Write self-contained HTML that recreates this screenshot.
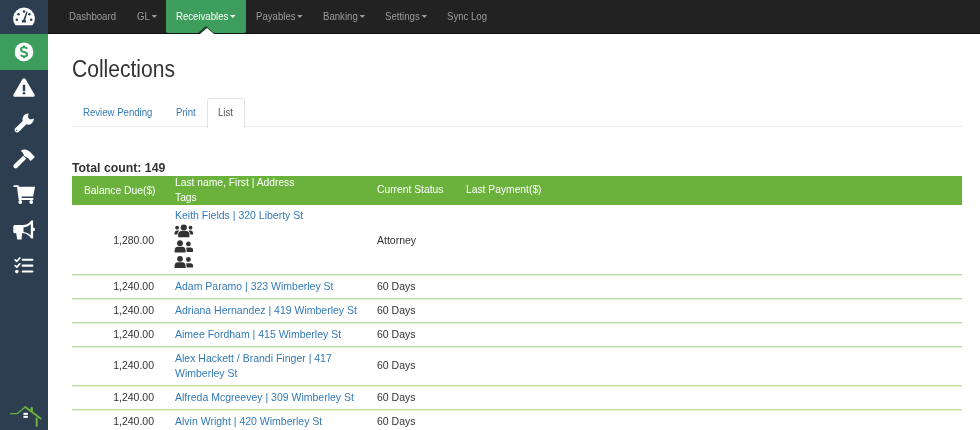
<!DOCTYPE html>
<html><head><meta charset="utf-8">
<style>
*{box-sizing:border-box;margin:0;padding:0}
html,body{width:980px;height:430px;overflow:hidden;background:#fff;font-family:"Liberation Sans",sans-serif;color:#333}
#side{position:absolute;left:0;top:0;width:48px;height:430px;background:#2c3e50}
#side .act{position:absolute;left:0;top:34px;width:48px;height:36px;background:#3c9d5d}
#side svg{position:absolute}
#nav{position:absolute;left:48px;top:0;width:932px;height:34px;background:#222;border-bottom:1px solid #111}
#nav span{position:absolute;top:10px;font-size:10.5px;line-height:12px;transform-origin:0 0;transform:scaleX(0.915);color:#9d9d9d;white-space:nowrap}
#nav .actbox{position:absolute;left:118px;top:0;width:80px;height:33px;background:#3c9d5d;border-radius:0 0 2px 2px}
#nav span.on{color:#fff}
.caret{display:inline-block;width:0;height:0;border-left:3px solid transparent;border-right:3px solid transparent;border-top:3px solid currentColor;vertical-align:middle;margin-left:2px;margin-top:-1px}
.notch{position:absolute;left:151.5px;top:27.5px;width:0;height:0;border-left:7px solid transparent;border-right:7px solid transparent;border-bottom:6.5px solid #fff}
.notch2{position:absolute;left:150.3px;top:26.3px;width:0;height:0;border-left:8.2px solid transparent;border-right:8.2px solid transparent;border-bottom:7.7px solid #1d3a26}
h1{position:absolute;left:72px;top:56px;font-size:23px;font-weight:normal;line-height:26px;color:#333;white-space:nowrap;transform-origin:0 0;transform:scaleX(0.915)}
#tabline{position:absolute;left:72px;top:126px;width:890px;height:1px;background:#ebebeb}
.tab{position:absolute;top:106px;font-size:10.5px;line-height:12px;color:#337ab7;white-space:nowrap;transform-origin:0 0;transform:scaleX(0.915)}
#listtab{position:absolute;left:207px;top:98px;width:38px;height:30px;background:#fff;border:1px solid #e3e3e3;border-bottom:none;border-radius:3px 3px 0 0}
#total{position:absolute;left:72px;top:160.5px;font-size:12.3px;font-weight:bold;line-height:14px;color:#333;white-space:nowrap}
#thead{position:absolute;left:72px;top:176px;width:890px;height:29px;background:#6ab23c;color:#fff}
#thead span{position:absolute;font-size:10.3px;line-height:15px;white-space:nowrap}
.row{position:absolute;left:72px;width:890px;border-bottom:1px solid #b6dca2;box-shadow:0 1px 0 #e2f1da}
.row span{position:absolute;font-size:10.5px;line-height:15px;white-space:nowrap}
.row .bal{right:808px;text-align:right}
.row .nm{left:103px;color:#337ab7}
.row .st{left:305px}
.layer{position:absolute;left:0;top:0;width:980px;height:430px;will-change:transform}
</style></head><body><div class="layer">
<div id="side">
  <div class="act"></div>
<svg width="48" height="430" viewBox="0 0 48 430" style="left:0;top:0">
<g fill="#fff">
<!-- gauge -->
<path d="M15.6 25.3 A10.9 10.9 0 1 1 32.4 25.3 Z"/>
<g fill="#2c3e50">
<circle cx="18.5" cy="14.2" r="1.25"/><circle cx="24" cy="11.6" r="1.25"/><circle cx="29.4" cy="14.2" r="1.25"/>
<circle cx="16.8" cy="19.8" r="1.25"/><circle cx="31.2" cy="19.8" r="1.25"/>
<path d="M23.1 20.6 L26.4 11.6 L27.6 12 L24.9 21 Z"/>
<rect x="21.8" y="19.9" width="4.2" height="2.6" rx="0.8"/>
</g>
<!-- dollar -->
<circle cx="24" cy="51.9" r="9.3"/>
<g fill="none" stroke="#3c9d5d" stroke-width="2" stroke-linecap="butt"><path d="M27.1 48.9 C26.5 47.7 25.4 47.3 24 47.3 C22.2 47.3 21 48.2 21 49.7 C21 53.1 27.1 50.9 27.1 54.2 C27.1 55.7 25.9 56.6 24 56.6 C22.5 56.6 21.4 56.1 20.8 54.9"/><path d="M24 45.6 V47.4 M24 56.5 V58.2"/></g>
<!-- warning -->
<path d="M24 78.3 Q25 78.3 25.6 79.3 L34.6 94.8 Q35.2 96.6 33.6 96.8 L14.4 96.8 Q12.8 96.6 13.4 94.8 L22.4 79.3 Q23 78.3 24 78.3 Z"/>
<g fill="#2c3e50"><rect x="22.8" y="84.8" width="2.4" height="6.4" rx="0.6"/><circle cx="24" cy="93.2" r="1.25"/></g>
<!-- wrench -->
<path d="M15 128.4 L22.8 121 A5.7 5.7 0 0 1 28.6 113.5 L28 116.4 Q28.2 119.4 31.4 119.2 L33.9 118.6 A5.7 5.7 0 0 1 26.4 124.3 L18.6 131.9 A2.55 2.55 0 0 1 15 128.4 Z"/>
<circle cx="16.7" cy="130.2" r="0.65" fill="#2c3e50"/>
<!-- hammer -->
<path d="M14 164.6 L23.2 155.8 L26.2 158.8 L17.2 167.8 A2.2 2.2 0 0 1 14 164.6 Z"/>
<path d="M20.8 150.8 Q25.8 147.2 31.4 153.2 L33.2 155.2 L34.9 157 L30.8 161.1 L28.9 159.2 L28.7 158.5 Q26.4 157 24.2 156 Q23.6 152.8 20.8 150.8 Z"/>
<!-- cart -->
<path d="M14.2 185.2 L18.4 185.2 L19.1 186.8 L35.1 186.8 L33.1 196.6 L21.6 196.6 L21.8 197.9 L33.5 197.9 L33.2 199.9 L18.8 199.9 L17 187 L14.2 187 A0.9 0.9 0 0 1 14.2 185.2 Z"/>
<circle cx="20.3" cy="202" r="1.9"/><circle cx="31.2" cy="202" r="1.9"/>
<!-- megaphone -->
<path d="M14.8 225.1 L22.7 225.1 C26.6 225.1 29.6 223.2 31.2 220.6 L33.1 220.6 L33.1 227.6 L35 228.4 L35 230.4 L33.1 231.2 L33.1 238.5 L31.2 238.5 C29.6 235.9 26.6 233.3 22.7 233.3 L22 233.3 L21.6 239.4 L17.2 239.4 L16.2 233.3 L14.8 233.3 Q13.3 233.3 13.3 231.8 L13.3 226.6 Q13.3 225.1 14.8 225.1 Z"/>
<path fill="#2c3e50" d="M23.5 227.3 C26.8 227 29.2 225.6 30.8 223.9 L30.8 235.3 C29.2 233.6 26.8 232.2 23.5 231.9 Z"/>
<!-- checklist -->
<path d="M15.2 259.8 L16.9 261.3 L19.8 258" stroke="#fff" stroke-width="1.7" fill="none" stroke-linecap="round" stroke-linejoin="round"/>
<path d="M15.2 265.6 L16.9 267.1 L19.8 263.8" stroke="#fff" stroke-width="1.7" fill="none" stroke-linecap="round" stroke-linejoin="round"/>
<circle cx="16.8" cy="271.6" r="1.8"/>
<rect x="21.7" y="258.7" width="11.7" height="2.1" rx="0.8"/>
<rect x="21.7" y="264.6" width="11.7" height="2.1" rx="0.8"/>
<rect x="21.7" y="270.5" width="11.7" height="2.1" rx="0.8"/>
</g>
<!-- house -->
<g fill="none" stroke="#6ab23c" stroke-linecap="round" stroke-linejoin="round">
<path d="M10.6 413.7 L17 413.7 L25.3 407" stroke-width="1.3"/>
<path d="M25.3 407 L40.6 418.6" stroke-width="1.9"/>
<path d="M36.7 418.4 L36.7 426" stroke-width="2"/>
</g>
<path d="M30.4 411.4 L30.4 408 Q31.6 405.6 32.9 408 L32.9 413.2 Z" fill="#6ab23c"/>
<g fill="#fff"><rect x="23.4" y="412.8" width="4.4" height="2.1"/><rect x="23.4" y="415.8" width="4.4" height="2.1"/></g>
</svg>
</div>
<div id="nav">
  <div class="actbox"></div>
  <div class="notch2"></div><div class="notch"></div>
  <span style="left:21px">Dashboard</span>
  <span style="left:89px">GL<i class="caret"></i></span>
  <span class="on" style="left:128px">Receivables<i class="caret"></i></span>
  <span style="left:208px">Payables<i class="caret"></i></span>
  <span style="left:275px">Banking<i class="caret"></i></span>
  <span style="left:337px">Settings<i class="caret"></i></span>
  <span style="left:399px">Sync Log</span>
</div>
<h1>Collections</h1>
<div id="tabline"></div>
<div id="listtab"></div>
<div class="tab" style="left:83px">Review Pending</div>
<div class="tab" style="left:176px">Print</div>
<div class="tab" style="left:218px;color:#555">List</div>
<svg width="30" height="50" viewBox="170 222 30 50" style="position:absolute;left:170px;top:222px" fill="#333">
<circle cx="183.8" cy="227.5" r="3.1"/>
<circle cx="177.1" cy="227.7" r="1.9"/><circle cx="190.5" cy="227.7" r="1.9"/>
<path d="M178.2 236.9 L178.2 234.6 Q178.2 231 181.4 231 L186.2 231 Q189.4 231 189.4 234.6 L189.4 236.9 Q189.4 237.3 189 237.3 L178.6 237.3 Q178.2 237.3 178.2 236.9 Z"/>
<path d="M174.4 234.6 Q174.4 230.4 177 230.4 L179.2 230.4 Q177.6 232 177.4 234.6 Z"/>
<path d="M193.2 234.6 Q193.2 230.4 190.6 230.4 L188.4 230.4 Q190 232 190.2 234.6 Z"/>
<g id="uf">
<circle cx="180" cy="243.2" r="2.9"/>
<path d="M174.6 251.8 L174.6 250.6 Q174.6 246.7 178 246.7 L182.2 246.7 Q185.6 246.7 185.6 250.6 L185.6 251.8 Q185.6 252.5 185 252.5 L175.2 252.5 Q174.6 252.5 174.6 251.8 Z"/>
<circle cx="188.4" cy="243.9" r="2.4"/>
<path d="M186.2 247.6 L190.4 247.6 Q193.1 247.6 193.1 250.4 L193.1 251.3 Q193.1 252 192.4 252 L186.6 252 Q186.6 249.4 186.2 247.6 Z"/>
</g>
<use href="#uf" transform="translate(0 15.6)"/>
</svg>
<div id="total">Total count: 149</div>
<div id="thead">
  <span style="left:12px;top:7px">Balance Due($)</span>
  <span style="left:103px;top:-1px">Last name, First | Address<br>Tags</span>
  <span style="left:305px;top:6px">Current Status</span>
  <span style="left:394px;top:6px">Last Payment($)</span>
</div>
<div class="row" style="top:205px;height:70px">
  <span class="bal" style="top:27.5px">1,280.00</span>
  <span class="nm" style="top:3px">Keith Fields | 320 Liberty St</span>
  <span class="st" style="top:27.5px">Attorney</span>
</div>
<div class="row" style="top:275px;height:24px">
  <span class="bal" style="top:4px">1,240.00</span><span class="nm" style="top:4px">Adam Paramo | 323 Wimberley St</span><span class="st" style="top:4px">60 Days</span>
</div>
<div class="row" style="top:299px;height:24px">
  <span class="bal" style="top:4px">1,240.00</span><span class="nm" style="top:4px">Adriana Hernandez | 419 Wimberley St</span><span class="st" style="top:4px">60 Days</span>
</div>
<div class="row" style="top:323px;height:24px">
  <span class="bal" style="top:4px">1,240.00</span><span class="nm" style="top:4px">Aimee Fordham | 415 Wimberley St</span><span class="st" style="top:4px">60 Days</span>
</div>
<div class="row" style="top:347px;height:39px">
  <span class="bal" style="top:11px">1,240.00</span><span class="nm" style="top:4px">Alex Hackett / Brandi Finger | 417<br>Wimberley St</span><span class="st" style="top:11px">60 Days</span>
</div>
<div class="row" style="top:386px;height:24px">
  <span class="bal" style="top:4px">1,240.00</span><span class="nm" style="top:4px">Alfreda Mcgreevey | 309 Wimberley St</span><span class="st" style="top:4px">60 Days</span>
</div>
<div class="row" style="top:410px;height:24px">
  <span class="bal" style="top:4px">1,240.00</span><span class="nm" style="top:4px">Alvin Wright | 420 Wimberley St</span><span class="st" style="top:4px">60 Days</span>
</div>
</div></body></html>
